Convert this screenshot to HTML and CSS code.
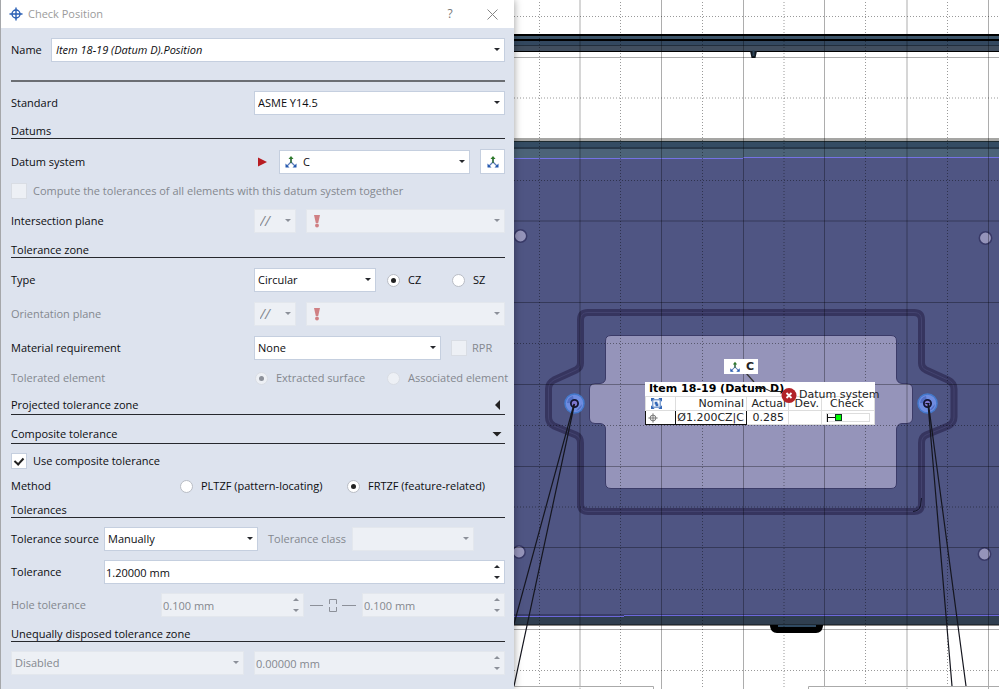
FILE: index.html
```html
<!DOCTYPE html>
<html lang="en">
<head>
<meta charset="utf-8">
<title>Check Position</title>
<link rel="stylesheet" href="styles.css">
</head>
<body>
<svg class="defs" aria-hidden="true">
  <symbol id="i-datum" viewBox="0 0 14 14">
    <path d="M7 7V2.500M7 7L2.500 11.500M7 7L11.500 11.500" stroke="#5a7cb8" stroke-width="1.200" fill="none"/>
    <path d="M7 8V3" stroke="#2f6b2f" stroke-width="1.500"/>
    <path d="M7 1L9.500 4H4.500Z" fill="#2e7a2a"/>
    <path d="M1.500 8.500V12.500H5.500ZM12.500 8.500V12.500H8.500Z" fill="#2458b0"/>
  </symbol>
  <symbol id="i-alert" viewBox="0 0 8 14">
    <path d="M1 1H7L5.200 9H2.800Z" fill="#d08084"/><circle cx="4" cy="11.500" r="1.900" fill="#d08084"/>
  </symbol>
  <symbol id="i-position" viewBox="0 0 14 14">
    <circle cx="7" cy="7" r="4" fill="none" stroke="currentColor" stroke-width="1.400"/>
    <path d="M7 0.500V13.500M0.500 7H13.500" stroke="currentColor" stroke-width="1.400"/>
  </symbol>
</svg>
<div class="workspace">
  <main class="dialog">
    <header class="titlebar">
      <svg class="ico blue" viewBox="0 0 14 14"><use href="#i-position"/></svg>
      <h1>Check Position</h1>
      <button type="button" class="help" aria-label="Help">?</button>
      <button type="button" class="close" aria-label="Close"><svg viewBox="0 0 11 11"><path d="M0.500 0.500L10.500 10.500M10.500 0.500L0.500 10.500" stroke="#858585" fill="none"/></svg></button>
    </header>
    <form class="form">
      <div class="row name-row">
        <label for="name">Name</label>
        <span class="pick"><select id="name" class="italic"><option>Item 18-19 (Datum D).Position</option></select></span>
      </div>
      <hr>
      <div class="row wide">
        <label for="standard">Standard</label>
        <span class="pick"><select id="standard"><option>ASME Y14.5</option></select></span>
      </div>

      <section class="group roomy datums">
        <h2>Datums</h2>
        <div class="row datum-row">
          <label for="datum">Datum system</label>
          <svg class="play" viewBox="0 0 10 10"><path d="M1 0.500L10 5L1 9.500Z" fill="#b81c22"/></svg>
          <span class="pick with-icon"><svg class="ico" viewBox="0 0 14 14"><use href="#i-datum"/></svg><select id="datum"><option>C</option></select></span>
          <button type="button" class="tool" aria-label="Create datum system"><svg class="ico" viewBox="0 0 14 14"><use href="#i-datum"/></svg></button>
        </div>
        <label class="check off"><input type="checkbox" disabled><span>Compute the tolerances of all elements with this datum system together</span></label>
        <div class="row plane-row">
          <label for="iplane">Intersection plane</label>
          <span class="pick"><select id="iplane" class="slashes" disabled><option>//</option></select></span>
          <span class="pick with-icon"><svg class="alert" viewBox="0 0 8 14"><use href="#i-alert"/></svg><select aria-label="Intersection plane element" disabled><option></option></select></span>
        </div>
      </section>

      <section class="group roomy zone">
        <h2>Tolerance zone</h2>
        <div class="row type-row">
          <label for="type">Type</label>
          <span class="pick"><select id="type"><option>Circular</option></select></span>
          <label class="check"><input type="radio" name="zone" checked><span>CZ</span></label>
          <label class="check"><input type="radio" name="zone"><span>SZ</span></label>
        </div>
        <div class="row plane-row off">
          <label for="oplane">Orientation plane</label>
          <span class="pick"><select id="oplane" class="slashes" disabled><option>//</option></select></span>
          <span class="pick with-icon"><svg class="alert" viewBox="0 0 8 14"><use href="#i-alert"/></svg><select aria-label="Orientation plane element" disabled><option></option></select></span>
        </div>
        <div class="row material-row">
          <label for="material">Material requirement</label>
          <span class="pick"><select id="material"><option>None</option></select></span>
          <label class="check tight off"><input type="checkbox" disabled><span>RPR</span></label>
        </div>
        <div class="row short element-row off">
          <span>Tolerated element</span>
          <label class="check"><input type="radio" name="element" checked disabled><span>Extracted surface</span></label>
          <label class="check"><input type="radio" name="element" disabled><span>Associated element</span></label>
        </div>
      </section>

      <section class="group folding">
        <h2>Projected tolerance zone<svg class="fold" viewBox="0 0 10 10"><path d="M8 0V10L3 5Z" fill="#222"/></svg></h2>
      </section>

      <section class="group folding">
        <h2>Composite tolerance<svg class="fold" viewBox="0 0 10 10"><path d="M0.500 3H9.500L5 7.500Z" fill="#222"/></svg></h2>
        <label class="check"><input type="checkbox" checked><span>Use composite tolerance</span></label>
        <div class="row short method-row">
          <span>Method</span>
          <label class="check"><input type="radio" name="method"><span>PLTZF (pattern-locating)</span></label>
          <label class="check"><input type="radio" name="method" checked><span>FRTZF (feature-related)</span></label>
        </div>
      </section>

      <section class="group tolerances">
        <h2>Tolerances</h2>
        <div class="row source-row">
          <label for="source">Tolerance source</label>
          <span class="pick"><select id="source"><option>Manually</option></select></span>
          <label for="tclass" class="off">Tolerance class</label>
          <span class="pick"><select id="tclass" disabled><option></option></select></span>
        </div>
        <div class="row tolerance-row">
          <label for="tol">Tolerance</label>
          <span class="spin"><input id="tol" type="text" value="1.20000 mm"></span>
        </div>
        <div class="row hole-row off">
          <label for="hole">Hole tolerance</label>
          <span class="spin"><input id="hole" type="text" value="0.100 mm" disabled></span>
          <svg class="link" viewBox="0 0 46 16"><path d="M0 8.500H13M32 8.500H46M19.500 7V2.500H26.500V7M19.500 10V14.500H26.500V10" fill="none" stroke="#8c9099"/></svg>
          <span class="spin"><input aria-label="Hole tolerance upper" type="text" value="0.100 mm" disabled></span>
        </div>
      </section>

      <section class="group unequal">
        <h2>Unequally disposed tolerance zone</h2>
        <div class="row unequal-row">
          <span class="pick"><select aria-label="Unequal zone mode" disabled><option>Disabled</option></select></span>
          <span class="spin"><input aria-label="Unequal zone value" type="text" value="0.00000 mm" disabled></span>
        </div>
      </section>
    </form>
  </main>

  <aside class="scene" aria-label="3D view">
    <svg class="model" viewBox="514 0 485 689" preserveAspectRatio="xMinYMin slice">
      <rect x="514" width="485" height="689" fill="#fff"/>
      <!-- upper rail -->
      <g>
        <rect x="514" y="34" width="485" height="18" fill="#000"/>
        <rect x="514" y="36" width="485" height="3" fill="#3c5468"/>
        <rect x="514" y="41" width="485" height="4" fill="#33485f"/>
        <rect x="514" y="45" width="485" height="1" fill="#222e3c"/>
        <rect x="514" y="46" width="485" height="5" fill="#414e5e"/>
        <path d="M750 51H757L755.500 58H751.500Z" fill="#111820"/><path d="M753.500 50V56" stroke="#2e4558" stroke-width="2"/>
      </g>
      <!-- housing -->
      <rect x="514" y="138" width="485" height="3" fill="#a5a5a3"/>
      <rect x="514" y="141" width="485" height="1" fill="#1c2a30"/>
      <rect x="514" y="142" width="485" height="6" fill="#344c63"/>
      <rect x="514" y="147" width="485" height="2" fill="#27384a"/>
      <rect x="514" y="149" width="485" height="9" fill="#4c6378"/>
      <rect x="514" y="158" width="485" height="457" fill="#4f5583"/>
      <path d="M514 158.500H743M743 157.500H999" stroke="#7472e4" fill="none"/>
      <rect x="514" y="614" width="485" height="2" fill="#3a3e68"/>
      <rect x="514" y="616" width="485" height="9" fill="#303f50"/>
      <path d="M514 616.500H624M624 615.500H999" stroke="#6c68da" fill="none"/>
      <rect x="514" y="624" width="485" height="1" fill="#202a34"/>
      <rect x="514" y="625" width="485" height="1" fill="#8a8784"/>
      <path d="M770 625H823C823 630 820 633 816 633H777C773 633 770 630 770 625Z" fill="#000"/>
      <rect x="778" y="625" width="38" height="2" fill="#304a62"/>
      <!-- gasket groove -->
      <g fill="none" stroke-linejoin="round">
        <path d="M588 312.500H914Q921.500 312.500 921.500 320V363Q921.500 368 926 370L948 380Q954 383 954 389V417Q954 423 948 426L926 435Q921.500 437 921.500 443V504Q921.500 511.500 914 511.500H588Q580.500 511.500 580.500 504V443Q580.500 437 576 435L554 426Q548.500 423 548.500 417V389Q548.500 383 554 380L576 370Q580.500 368 580.500 363V320Q580.500 312.500 588 312.500Z" stroke="#36355f" stroke-width="7"/>
        <path d="M588 312.500H914Q921.500 312.500 921.500 320V363Q921.500 368 926 370L948 380Q954 383 954 389V417Q954 423 948 426L926 435Q921.500 437 921.500 443V504Q921.500 511.500 914 511.500H588Q580.500 511.500 580.500 504V443Q580.500 437 576 435L554 426Q548.500 423 548.500 417V389Q548.500 383 554 380L576 370Q580.500 368 580.500 363V320Q580.500 312.500 588 312.500Z" stroke="#43436f"/>
        <path d="M913 511.500Q919 511 920.500 506L921.500 498" stroke="#15162c"/>
      </g>
      <path d="M611 335.500H891Q896.500 335.500 896.500 341V378Q897 383 902 383.500H907Q912.500 384 912.500 389V418Q912.500 423 907 423.500H902Q897 424 896.500 429V483Q896.500 488.500 891 488.500H611Q605.500 488.500 605.500 483V429Q605.500 424 600 423.500H595Q589.500 423 589.500 418V389Q589.500 384 595 383.500H600Q605.500 383 605.500 378V341Q605.500 335.500 611 335.500Z" fill="#9594ba" stroke="#3b3b68"/>
      <g fill="#9594ba" stroke="#393a68" stroke-width="1.500">
        <circle cx="520.500" cy="236" r="6.200"/><circle cx="985.500" cy="238" r="6.200"/><circle cx="519" cy="552" r="6.200"/><circle cx="984.500" cy="554" r="6.200"/>
      </g>
      <!-- measuring grid -->
      <path d="M580 0V689M661.500 0V689M743.500 0V689M824.500 0V689M907 0V689M988.500 0V689M514 57.500H999M514 221H999M514 302.500H999M514 384.500H999M514 466.500H999M514 547.500H999M514 629.500H999" stroke="#000" stroke-opacity=".32" fill="none"/>
      <path d="M539.500 2V689M620.500 2V689M702.500 2V689M784 2V689M865.500 2V689M947.500 2V689M514 16.500H999M514 98H999M514 180.500H999M514 343.500H999M514 425.500H999M514 507H999M514 589.500H999M514 670.500H999" stroke="#000" stroke-opacity=".4" stroke-dasharray="1 2" fill="none"/>
      <!-- measured holes and their leaders -->
      <g fill="#6f8ce0" stroke="#4479cc" stroke-width="1.500">
        <circle cx="574.500" cy="403.500" r="9.500"/><circle cx="927.500" cy="403.500" r="9.500"/>
      </g>
      <path d="M567 403A8 8 0 0 1 573 396L574.500 403.500ZM582 404A8 8 0 0 1 576 411ZM920 403A8 8 0 0 1 926 396L927.500 403.500ZM935 404A8 8 0 0 1 929 411Z" fill="#536fc4"/>
      <g fill="#7d76cf" stroke="#131433" stroke-width="1.800"><circle cx="574.500" cy="403.500" r="3.600"/><circle cx="927.500" cy="403.500" r="3.600"/></g>
      <path d="M574 404L514 624M574.500 404L514 686M928 404L952 686M928.500 404L966 686M925.500 403.500H929.500" stroke="#15161f" stroke-width="1.200" fill="none"/>
      <path d="M514 686.500H653.500V689M808.500 689V686.500H999" fill="#fff" stroke="#aaa"/>
      <path d="M746 373L754 382" stroke="#333" stroke-width="1.200"/>
    </svg>
    <div class="tag"><svg class="ico" viewBox="0 0 14 14"><use href="#i-datum"/></svg><b>C</b></div>
    <table class="report">
      <caption>Item 18-19 (Datum D)</caption>
      <colgroup><col class="c1"><col class="c2"><col class="c3"><col class="c4"><col class="c5"></colgroup>
      <thead><tr>
        <th><svg class="mini" viewBox="0 0 12 12"><rect x="2" y="2" width="8" height="8" fill="none" stroke="#3569b8"/><path d="M0 0H4L0 4ZM12 0V4L8 0ZM0 12V8L4 12ZM12 12H8L12 8Z" fill="#3569b8"/><path d="M4 4H7V6H8V9H5V7H4Z" fill="#3569b8"/></svg></th>
        <th>Nominal</th><th>Actual</th><th>Dev.</th><th class="center">Check</th>
      </tr></thead>
      <tbody><tr>
        <td class="boxed"><svg class="mini gray" viewBox="0 0 14 14"><use href="#i-position"/></svg></td>
        <td class="boxed">Ø1.200CZ|C</td><td>0.285</td><td></td>
        <td><svg class="gauge" viewBox="0 0 46 10"><rect x="0.500" y="0.500" width="43" height="8" fill="#fff" stroke="#ddd"/><path d="M1.500 1V9M1 4.500H10" stroke="#111"/><rect x="9.500" y="1.500" width="6" height="6" fill="#0f0" stroke="#132"/></svg></td>
      </tr></tbody>
    </table>
    <div class="fault">
      <svg viewBox="0 0 44 18"><path d="M0 2.500H10L16 5.500H30" fill="none" stroke="#222"/><circle cx="34" cy="9.500" r="7.500" fill="#b22328"/><path d="M31.500 7L36.500 12M36.500 7L31.500 12" stroke="#fff" stroke-width="1.800"/></svg>
      <span>Datum system</span>
    </div>
  </aside>
</div>
</body>
</html>
```
FILE: styles.css
```css
* { box-sizing: border-box; }
body { margin: 0; background: #fff; color: #0c0d10; font: 11px/16px "Open Sans", "Noto Sans", sans-serif; }
h1, h2 { margin: 0; font-size: inherit; font-weight: normal; }
button, select, input { font: inherit; color: inherit; margin: 0; }
svg { display: block; }
.defs { position: absolute; width: 0; height: 0; }
.ico { width: 14px; height: 14px; flex: none; }
.blue { color: #2a5fb4; }

.workspace { display: grid; grid-template-columns: minmax(514px, 514fr) minmax(0, 485fr); min-height: 100vh; }
.dialog { position: relative; z-index: 1; background: #dde3ee; border-left: 1px solid #a5a7aa; box-shadow: 0 0 8px #0006; }

.titlebar { display: flex; align-items: center; height: 28px; background: #fff; padding: 0 16px 0 8px; color: #9b9b9b; }
.titlebar h1 { flex: 1; margin-left: 5px; }
.titlebar button { border: 0; background: none; padding: 0; color: #777; font-size: 12px; }
.help { width: 20px; margin-right: 27px; }
.close { width: 11px; }
.close svg { width: 11px; height: 11px; }

.form { padding: 10px 9px 14px; }
.form hr { height: 2px; margin: 18px 0 9px; border: 0; background: #6b6e73; }
.row { display: grid; align-items: center; height: 24px; }
.short { height: 16px; }
.off { color: #84888f; }

.group { display: grid; grid-template-columns: minmax(0, 1fr); gap: 9px; }
.roomy { gap: 10px; }
.group h2 { display: flex; justify-content: space-between; align-items: end; height: 17px; line-height: 14px; border-bottom: 1px solid #26282d; }
.folding h2 { align-items: start; }
.fold { width: 10px; height: 10px; margin: 2px 3px 0 0; }
.datums, .tolerances { margin-top: 7px; }
.zone, .unequal { margin-top: 8px; }
.folding { margin-top: 12px; }

.form { padding-left: 10px; }
.name-row { grid-template-columns: 40px 1fr; }
.wide { grid-template-columns: 243px 1fr; }
.datum-row { grid-template-columns: 246px 22px 1fr 25px; }
.datum-row .pick { margin-right: 10px; }
.plane-row { grid-template-columns: 243px 42px 1fr; }
.plane-row .pick + .pick { margin-left: 10px; }
.type-row { grid-template-columns: 243px 122px 75px 1fr; }
.type-row .check, .element-row .check { padding-left: 10px; }
.type-row .check { height: 24px; }
.type-row .check:last-child { padding-left: 0; }
.material-row { grid-template-columns: 243px 187px 1fr; }
.material-row .check { margin-left: 10px; }
.element-row { grid-template-columns: 243px 122px minmax(0, 1fr); }
.element-row .check:nth-child(2) { padding-left: 0; }
.method-row { grid-template-columns: 168px 167px 1fr; }
.source-row { grid-template-columns: 93px 154px 94px 122px; }
.source-row .off { margin-left: 10px; }
.tolerance-row { grid-template-columns: 93px 1fr; }
.hole-row { grid-template-columns: 150px 1fr 58px 1fr; }
.unequal-row { grid-template-columns: 233px 1fr; column-gap: 10px; }

.pick, .spin { position: relative; display: block; height: 24px; min-width: 0; }
.pick select, .spin input { display: block; width: 100%; height: 24px; padding: 0 18px 0 3px; border: 1px solid #c5cfdf; border-radius: 0; background: #fff; appearance: none; outline: 0; }
.spin input { padding-left: 1px; }
.pick select:disabled, .spin input:disabled { background: #edf0f5; border-color: #e3e7ed; color: #84888f; opacity: 1; }
.pick::after, .spin::before, .spin::after { content: ""; position: absolute; right: 5px; border: 3px solid transparent; pointer-events: none; }
.pick::after { top: 10px; border-top-color: #26282d; border-bottom: 0; }
.spin::before { top: 5px; z-index: 1; border-bottom-color: #26282d; border-top: 0; }
.spin::after { bottom: 5px; border-top-color: #26282d; border-bottom: 0; }
.pick:has(:disabled)::after, .spin:has(:disabled)::after { border-top-color: #8c9099; }
.spin:has(:disabled)::before { border-bottom-color: #8c9099; }
.pick .italic { font-style: italic; padding-left: 4px; }
.pick .slashes { font-size: 14px; font-style: italic; padding: 0 0 0 5px; }
.with-icon svg { position: absolute; left: 5px; top: 5px; }
.with-icon select { padding-left: 23px; }
.with-icon .alert { width: 8px; height: 14px; left: 7px; }
.play { width: 10px; height: 10px; }
.tool { display: grid; place-items: center; width: 25px; height: 25px; padding: 0; border: 1px solid #c5cfdf; background: #fff; }

.check { display: flex; align-items: center; gap: 6px; height: 16px; white-space: nowrap; }
.check input { flex: none; width: 16px; height: 16px; appearance: none; border: 1px solid #c5cfdf; background: #fff; display: grid; place-items: center; }
.check input[type=radio] { width: 13px; height: 13px; border-radius: 50%; border-color: #b9bdc5; }
.check:has([type=radio]) { gap: 8px; }
.check:has([type=radio]) input { margin-left: 1px; }
.check input:disabled { background: #edf0f5; border-color: #d9dde4; }
.check input[type=radio]:checked::before { content: ""; width: 5px; height: 5px; border-radius: 50%; background: #222; }
.check input[type=radio]:disabled::before { background: #8c9099; }
.check input[type=checkbox]:checked::before { content: ""; width: 4px; height: 7px; margin-top: -2px; border: solid #222; border-width: 0 2px 2px 0; transform: rotate(42deg); }
.tight { gap: 5px; }
.link { width: 46px; height: 16px; margin-left: 6px; }

.scene { position: relative; overflow: hidden; font: 11px/14px "DejaVu Sans", sans-serif; color: #222; }
.model { position: absolute; width: 100%; height: 100%; }
.tag { position: absolute; left: 210px; top: 359px; display: flex; align-items: center; height: 15px; padding: 0 4px 0 5px; background: #fff; }
.tag .ico { width: 12px; height: 12px; }
.tag b { margin-left: 5px; }
.report { position: absolute; left: 131px; top: 382px; width: 229px; border-collapse: collapse; table-layout: fixed; background: #fff; }
.report caption { background: #fff; padding-left: 4px; height: 14px; text-align: left; font-weight: bold; color: #000; white-space: nowrap; }
.report th, .report td { height: 14px; padding: 0 2px 0 0; border: 1px solid #ddd; font-weight: normal; line-height: 13px; text-align: right; white-space: nowrap; }
.report .center { text-align: center; }
.report .boxed { border: 1px solid #111; }
.report td:nth-child(3) { padding-right: 4px; }
.c1 { width: 30px; } .c2 { width: 71px; } .c3 { width: 42px; } .c4 { width: 33px; } .c5 { width: 53px; }
.mini { width: 11px; height: 11px; margin-left: 5px; }
.gray { width: 10px; height: 10px; margin-left: 2px; color: #777; }
.gauge { width: 46px; height: 10px; margin-left: 4px; }
.fault { position: absolute; left: 241px; top: 386px; display: flex; align-items: center; white-space: nowrap; }
.fault svg { width: 44px; height: 18px; }
```
